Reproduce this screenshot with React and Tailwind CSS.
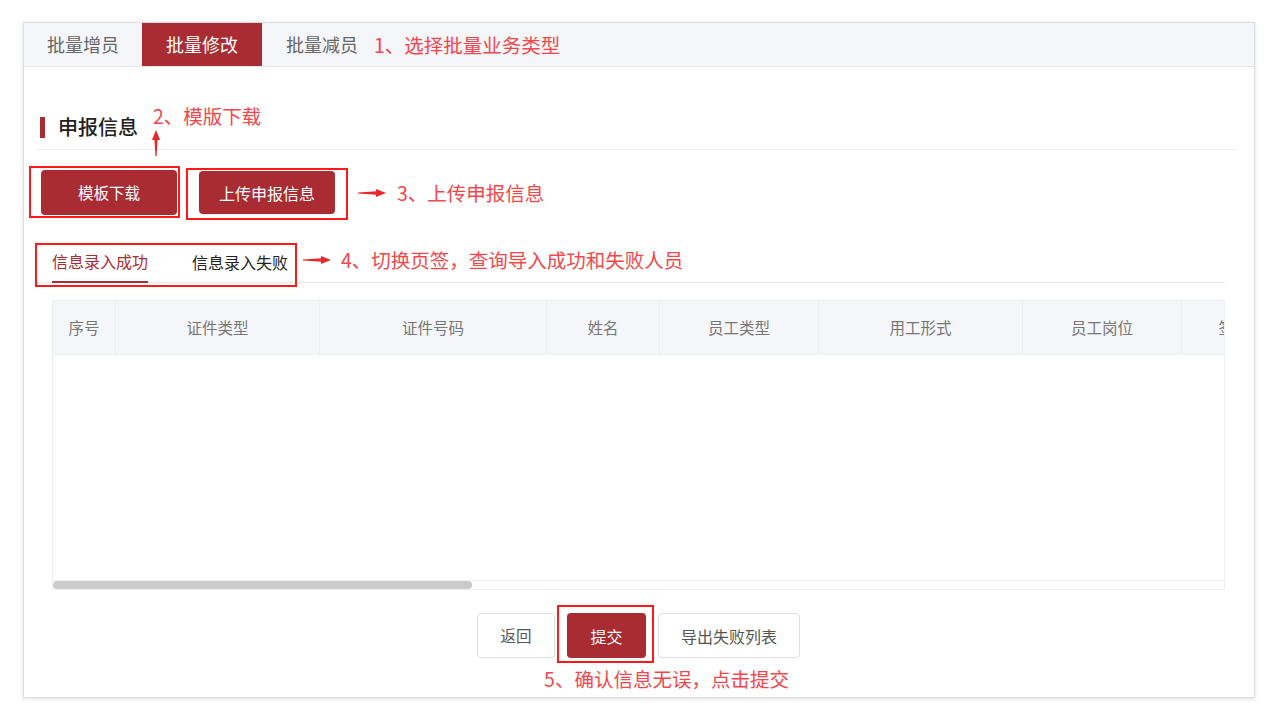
const RED = "bg-[#a92c33]";

const cols = [
  { name: "序号", w: "w-[63px]" },
  { name: "证件类型", w: "w-[204px]" },
  { name: "证件号码", w: "w-[227px]" },
  { name: "姓名", w: "w-[113px]" },
  { name: "员工类型", w: "w-[159px]" },
  { name: "用工形式", w: "w-[204px]" },
  { name: "员工岗位", w: "w-[159px]" },
  { name: "签约状态", w: "w-[136px]" },
];

const ArrowRight = ({ w = 28 }) => (
  <svg width={w} height="10" viewBox="0 0 28 10" className="shrink-0">
    <polygon points="0,4.4 19,3.2 19,6.8 0,5.6" fill="#e8262c" />
    <polygon points="18,1 28,5 18,9" fill="#e8262c" />
  </svg>
);

const ArrowUp = () => (
  <svg width="10" height="26" viewBox="0 0 10 26">
    <polygon points="5,0 9,10 1,10" fill="#e8262c" />
    <polygon points="3.4,9 6.6,9 5.6,26 4.4,26" fill="#e8262c" />
  </svg>
);

const Note = ({ children, className = "" }) => (
  <span className={"text-[19.5px] leading-[24px] text-[#f5474b] whitespace-nowrap " + className}>
    {children}
  </span>
);

export default function App() {
  return (
    <div
      className="w-[1266px] h-[720px] bg-white pt-[22px] pl-[23px]"
      style={{ fontFamily: '"Noto Sans CJK SC", "Noto Sans", sans-serif' }}
    >
      <div className="w-[1232px] h-[676px] border border-[#dcdde2] shadow-[0_1px_4px_rgba(0,0,0,0.12)] bg-white flex flex-col">
        {/* top tabs */}
        <div className="h-[44px] bg-[#f5f6fa] border-b border-[#e4e5ea] flex items-stretch">
          <div className="px-[23px] flex items-center text-[18px] text-[#666]">批量增员</div>
          <div className={"px-[24px] flex items-center text-[18px] text-white " + RED}>批量修改</div>
          <div className="px-[24px] flex items-center text-[18px] text-[#666]">批量减员</div>
          <div className="flex items-center -ml-[8px]">
            <Note>1、选择批量业务类型</Note>
          </div>
        </div>

        <div className="pl-[12px] pr-[17px] flex flex-col">
          {/* section title */}
          <div className="relative mt-[49px] h-[22px] flex items-center pl-[4px]">
            <div className={"w-[5px] h-[21px] " + RED}></div>
            <div className="ml-[13px] text-[20px] font-medium text-[#222] leading-[22px]">申报信息</div>
            <div className="absolute left-[117px] -top-[12px]">
              <Note>2、模版下载</Note>
            </div>
            <div className="absolute left-[115px] top-[14px]">
              <ArrowUp />
            </div>
          </div>
          <div className="mt-[11px] h-px bg-[#eeeef2]"></div>

          {/* action buttons */}
          <div className="mt-[20px] flex items-center pl-[5px]">
            <div className="relative">
              <button className={"w-[136px] h-[45px] rounded-[4px] text-white text-[15.5px] " + RED}>模板下载</button>
              <div className="absolute -left-[12px] -top-[4px] w-[151px] h-[52px] border-2 border-[#ff1a1a]"></div>
            </div>
            <div className="relative ml-[22px]">
              <button className={"w-[136px] h-[43px] rounded-[4px] text-white text-[16px] " + RED}>上传申报信息</button>
              <div className="absolute -left-[13px] -top-[3px] w-[162px] h-[52px] border-2 border-[#ff1a1a]"></div>
            </div>
            <div className="ml-[23px] flex items-center">
              <ArrowRight />
              <Note className="ml-[11px]">3、上传申报信息</Note>
            </div>
          </div>

          {/* result tabs */}
          <div className="mt-[33px] flex items-end border-b border-[#e6e7ec] ml-[1px] mr-[12px]">
            <div className="relative flex items-end pl-[15px]">
              <div className="pb-[9px] border-b-2 border-[#a92c33] text-[16px] leading-[22px] text-[#a92c33] -mb-px">信息录入成功</div>
              <div className="ml-[44px] pb-[9px] text-[16px] leading-[22px] text-[#222]">信息录入失败</div>
              <div className="absolute -left-[2px] -top-[7px] w-[262px] h-[44px] border-2 border-[#ff1a1a]"></div>
            </div>
            <div className="ml-[15px] mb-[10px] flex items-center">
              <ArrowRight />
              <Note className="ml-[10px]">4、切换页签，查询导入成功和失败人员</Note>
            </div>
          </div>

          {/* table */}
          <div className="mt-[17px] ml-[16px] w-[1173px] h-[290px] border border-[#ebeef5] flex flex-col overflow-hidden">
            <div className="h-[54px] bg-[#f5f6fa] border-b border-[#ebeef5] flex shrink-0">
              {cols.map((c) => (
                <div
                  key={c.name}
                  className={"shrink-0 h-full flex items-center justify-center border-r border-[#ebeef5] text-[15.5px] text-[#777] " + c.w}
                >
                  {c.name}
                </div>
              ))}
            </div>
            <div className="flex-1"></div>
            <div className="h-[9px] border-t border-[#f0f0f4] relative shrink-0">
              <div className="absolute left-0 top-0 w-[419px] h-[8px] rounded-full bg-[#cbcbcb]"></div>
            </div>
          </div>

          {/* footer buttons */}
          <div className="mt-[23px] flex justify-center">
            <div className="flex items-center gap-[12px] ml-[4px]">
              <button className="w-[78px] h-[45px] rounded-[4px] border border-[#dcdfe6] bg-white text-[15.5px] text-[#555]">返回</button>
              <div className="relative">
                <button className={"w-[79px] h-[45px] rounded-[4px] text-white text-[16px] " + RED}>提交</button>
                <div className="absolute -left-[10px] -top-[8px] w-[97px] h-[58px] border-2 border-[#ff1a1a]"></div>
              </div>
              <button className="w-[142px] h-[45px] rounded-[4px] border border-[#dcdfe6] bg-white text-[16px] text-[#555]">导出失败列表</button>
            </div>
          </div>
          <div className="mt-[9px] flex justify-center">
            <Note className="ml-[60px]">5、确认信息无误，点击提交</Note>
          </div>
        </div>
      </div>
    </div>
  );
}
